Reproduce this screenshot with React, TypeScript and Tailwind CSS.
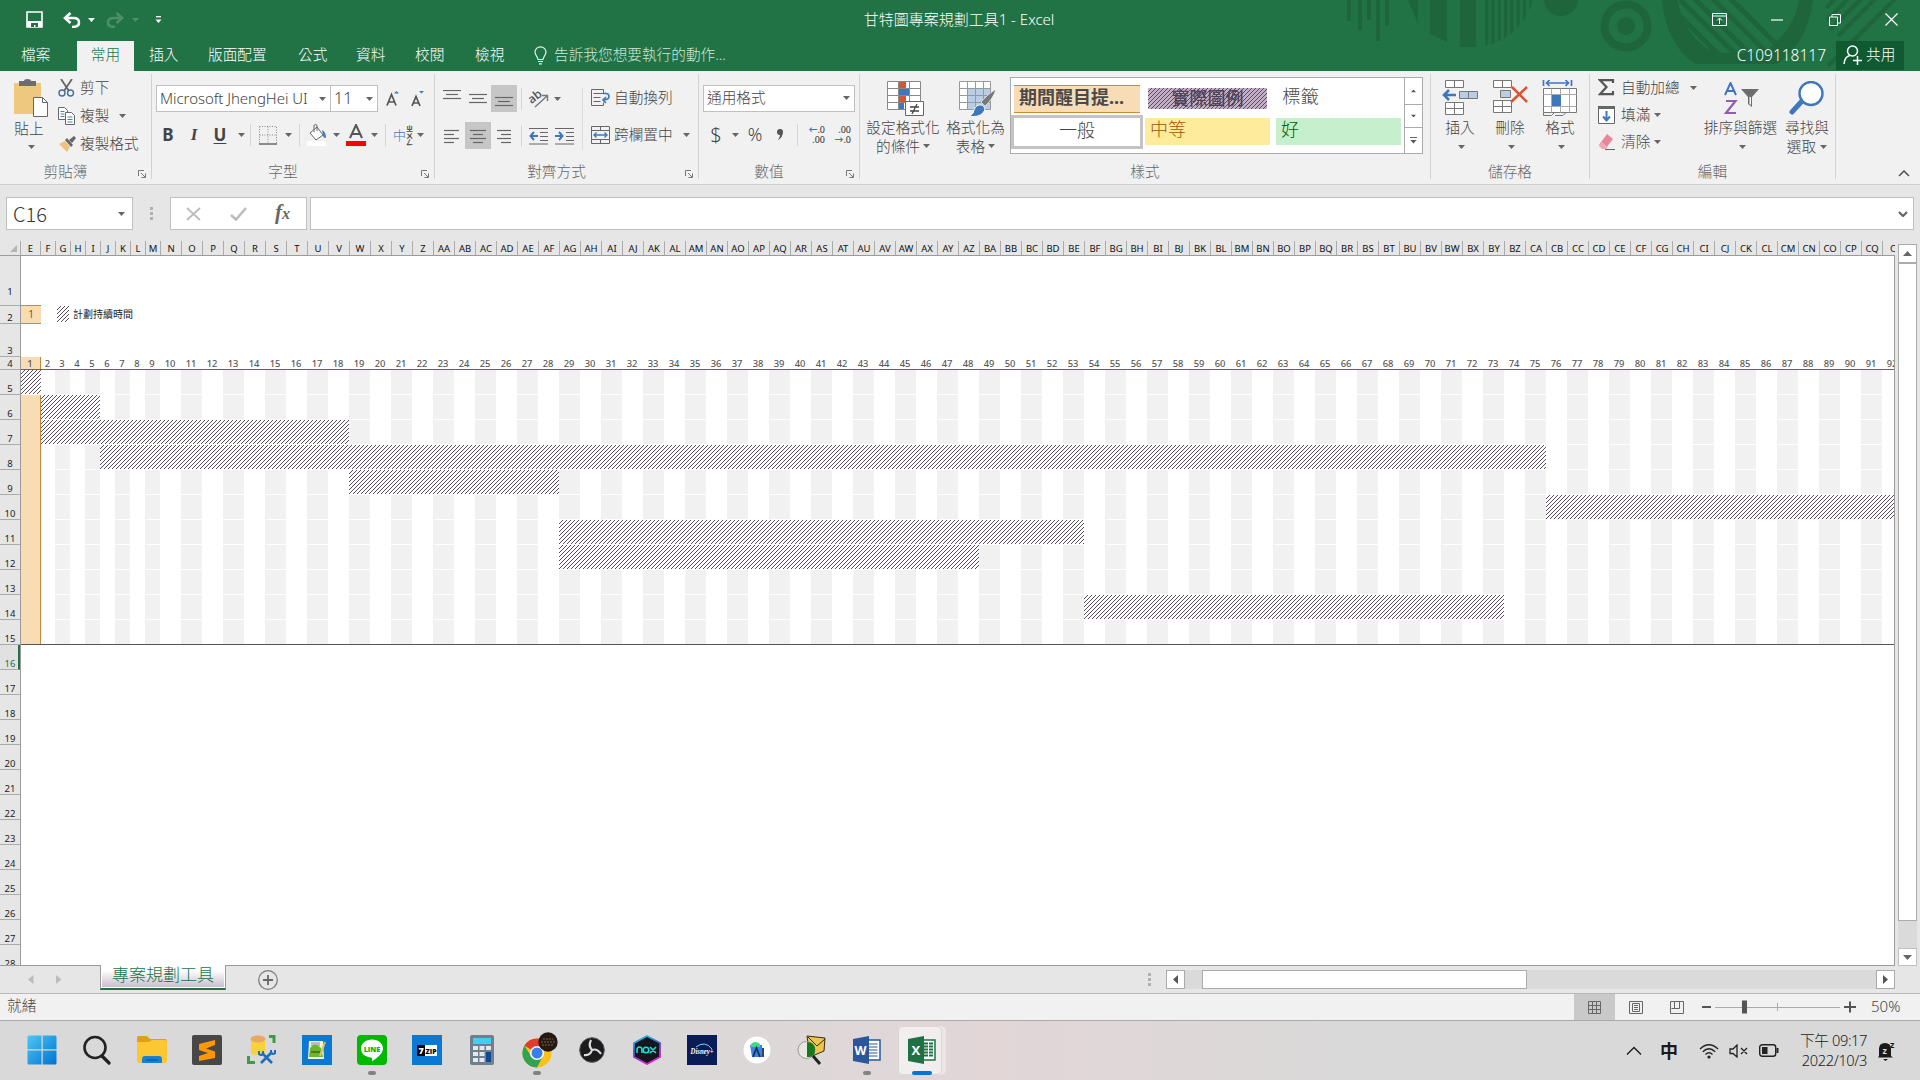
import React from "react";

type P = { children?: React.ReactNode; className?: string };

/* ---------- small drawing helpers ---------- */
const Svg = ({ w, h, children, className = "" }: P & { w: number; h: number }) => (
  <svg width={w} height={h} viewBox={`0 0 ${w} ${h}`} className={`block shrink-0 ${className}`} fill="none">
    {children}
  </svg>
);
const Caret = ({ className = "text-[#666]" }: P) => (
  <Svg w={7} h={4} className={className}>
    <path d="M0 0h7L3.5 4z" fill="currentColor" />
  </Svg>
);
const Slot = ({ children, className = "" }: P) => (
  <div className={`flex shrink-0 items-center justify-center ${className}`}>{children}</div>
);
const Launcher = () => (
  <Svg w={8} h={8}>
    <path d="M.5 6V.5H6M3 3l4 4M7.5 3.5v4h-4" stroke="#777" />
  </Svg>
);
const VSep = ({ className = "" }: P) => <div className={`h-[22px] w-px shrink-0 bg-[#d5d5d5] ${className}`} />;

const Group = ({ label, launcher, className = "", children }: P & { label: string; launcher?: boolean }) => (
  <section className={`flex h-[105px] shrink-0 flex-col border-r border-[#d2d2d2] ${className}`}>
    <div className="flex h-[88px] shrink-0">{children}</div>
    <div className="flex h-[19px] items-center">
      <div className="flex-1 text-center text-[#666]">{label}</div>
      {launcher && <div className="w-[20px] pl-[7px] pt-1"><Launcher /></div>}
    </div>
  </section>
);

const Lines = ({ w, rows }: { w: number; rows: [number, number, number][] }) => (
  <Svg w={w} h={18}>
    {rows.map(([x, y, l], i) => (
      <path key={i} d={`M${x} ${y + 0.5}h${l}`} stroke="#666" strokeWidth="1.2" />
    ))}
  </Svg>
);

/* ---------- title bar ---------- */
const Pattern = () => (
  <Svg w={580} h={71} className="absolute right-0 top-0">
    <defs>
      <clipPath id="ca"><circle cx="132" cy="-16" r="63" /></clipPath>
      <clipPath id="cb"><circle cx="397" cy="2" r="58" /></clipPath>
    </defs>
    <g fill="#1e653c">
      <path d="M7 0h4v21H7zM18 0h4v30h-4zM27 0h4v20h-4zM36 0h4v41h-4zM45 0h4v26h-4z" />
      <path d="M68 0h10v24zM90 0h17v42L90 34zM120 0h16v47h-16z" />
      <g clipPath="url(#ca)">
        {[0, 1, 2, 3, 4, 5, 6, 7].map((i) => (
          <rect key={i} x={145 + i * 6.3} y="0" width="3.4" height="60" />
        ))}
      </g>
      <circle cx="221" cy="-1" r="17" />
      <circle cx="286" cy="26" r="9" />
    </g>
    <circle cx="286" cy="26" r="21.5" stroke="#1e653c" strokeWidth="8" />
    <path d="M322 0h16c2 22 16 42 37 53h48c17-12 33-30 36-53h14c-3 28-17 52-36 64h-82C337 52 324 28 322 0z" fill="#1e653c" />
    <g clipPath="url(#cb)" stroke="#1e653c" strokeWidth="5">
      <path d="M330-10l82 80M342-14l90 90M356-18l90 90M372-20l80 80M322-2l70 70" />
    </g>
    <g stroke="#1e653c" strokeWidth="4">
      <path d="M486 8l10-10M487 20l22-22M490 30l34-34M498 36l42-42M488 66l70-70" />
    </g>
  </Svg>
);

const TitleBar = () => (
  <header className="relative h-[71px] shrink-0 overflow-hidden bg-[#217346] text-white">
    <Pattern />
    <div className="relative flex h-[39px] items-center">
      <div className="flex w-[640px] items-center">
        <Svg w={17} h={17} className="ml-[26px]">
          <path d="M1 1h15v15H1z" stroke="#fff" strokeWidth="1.6" />
          <path d="M1 10h15v6H1z" fill="#fff" />
          <path d="M5 12h7v4H9.500v-2H8v2H5z" fill="#217346" />
        </Svg>
        <Svg w={18} h={16} className="ml-[20px]">
          <path d="M2 6h8.500q5.500 0 5.500 4.500Q16 15 9 15" stroke="#fff" strokeWidth="2.500" />
          <path d="M7.500 1L2 6l5.500 5" stroke="#fff" strokeWidth="2.600" />
        </Svg>
        <Caret className="ml-[7px] text-white" />
        <Svg w={18} h={16} className="ml-[11px]">
          <path d="M16 6H7.500Q2 6 2 10.500 2 15 9 15" stroke="#4c9069" strokeWidth="2.500" />
          <path d="M10.500 1L16 6l-5.500 5" stroke="#4c9069" strokeWidth="2.600" />
        </Svg>
        <Caret className="ml-[8px] text-[#4c9069]" />
        <Svg w={7} h={7} className="ml-[16px]">
          <path d="M1 .7h5" stroke="#fff" strokeWidth="1.300" />
          <path d="M.5 3.500h6L3.500 7z" fill="#fff" />
        </Svg>
      </div>
      <div className="w-[640px] pr-[2px] text-center text-[15px]">甘特圖專案規劃工具1 - Excel</div>
      <div className="flex w-[640px] items-center justify-end">
        <Svg w={15} h={13}>
          <path d="M.5.5h14v12H.5zM.5 3h14M7.500 11V5.500M5 7.500l2.500-2.500L10 7.500" stroke="#fff" />
        </Svg>
        <Svg w={12} h={12} className="ml-[44px]"><path d="M0 6h12" stroke="#fff" strokeWidth="1.200" /></Svg>
        <Svg w={12} h={12} className="ml-[46px]">
          <path d="M.5 3h8v8.500h-8zM3 3V.5h8.500V9H8.500" stroke="#fff" />
        </Svg>
        <Svg w={13} h={13} className="ml-[44px] mr-[22px]"><path d="M.5.5l12 12M12.500.5l-12 12" stroke="#fff" strokeWidth="1.200" /></Svg>
      </div>
    </div>
    <nav className="relative flex h-[32px] items-center text-[14.67px] *:relative">
      <div className="w-[77px] pl-[21px]">檔案</div>
      <div className="flex h-[30px] w-[57px] items-center justify-center self-end bg-[#f1f1f1] pb-[2px] text-[#217346]">常用</div>
      <div className="w-[59px] pl-[15px]">插入</div>
      <div className="w-[90px] pl-[15px]">版面配置</div>
      <div className="w-[58px] pl-[15px]">公式</div>
      <div className="w-[59px] pl-[15px]">資料</div>
      <div className="w-[60px] pl-[15px]">校閱</div>
      <div className="w-[74px] pl-[15px]">檢視</div>
      <Svg w={13} h={19}>
        <path d="M4 13.500C4 11 1 9.500 1 6a5.500 5.200 0 0 1 11 0c0 3.500-3 5-3 7.500zM4 15.500h5M5 17.800h3" stroke="#e6f2ea" strokeWidth="1.200" />
      </Svg>
      <div className="ml-[7px] text-[#cfe6d8]">告訴我您想要執行的動作...</div>
      <div className="flex flex-1 items-center justify-end">
        <span className="mr-[10px] text-[15.500px]">C109118117</span>
        <div className="mr-4 flex h-[29px] w-[68px] items-center gap-[3px] bg-[#0f5a30] pl-[7px]">
          <Svg w={20} h={20}>
            <circle cx="9.500" cy="6" r="5" stroke="#fff" strokeWidth="1.500" />
            <path d="M1 19c.5-5 3-8 6-8.500M10 15.500h9M14.500 11v9" stroke="#fff" strokeWidth="1.500" />
          </Svg>
          <span>共用</span>
        </div>
      </div>
    </nav>
  </header>
);

/* ---------- ribbon ---------- */
const Clipboard = () => (
  <Group label="剪貼簿" launcher className="w-[152px]">
    <div className="flex w-[58px] flex-col items-center pt-[5px]">
      <Svg w={36} h={38} className="ml-[4px]">
        <path d="M1 4h27v31H1z" fill="#edc87e" />
        <path d="M6 2h5q0-2 3.500-2T18 2h5v5H6z" fill="#6d6d6d" />
        <path d="M20.500 18.500h9l5 5v14h-14z" fill="#fff" stroke="#666" />
        <path d="M29.500 18.500v5h5" stroke="#666" />
      </Svg>
      <div className="mt-px leading-[20px]">貼上</div>
      <Caret className="mt-[7px] ml-[4px] text-[#666]" />
    </div>
    <div className="flex flex-col">
      <div className="flex h-[28px] items-center">
        <Svg w={17} h={18}>
          <path d="M3 0l8 12M14 0L6 12" stroke="#666" strokeWidth="1.800" />
          <circle cx="4" cy="14" r="3" stroke="#41719c" strokeWidth="1.400" />
          <circle cx="12.500" cy="14" r="3" stroke="#41719c" strokeWidth="1.400" />
        </Svg>
        <span className="ml-[5px]">剪下</span>
      </div>
      <div className="flex h-[28px] items-center">
        <Svg w={18} h={18}>
          <path d="M.5.5h6l3 3v9h-9z" fill="#fff" stroke="#666" />
          <path d="M2.500 4.500h4M2.500 7h4M2.500 9.500h4" stroke="#4a7ebb" />
          <path d="M7.500 5.500h6l3 3v9h-9z" fill="#fff" stroke="#666" />
          <path d="M9.500 10h5M9.500 12.500h5M9.500 15h5" stroke="#4a7ebb" />
        </Svg>
        <span className="ml-[4px]">複製</span>
        <Caret className="ml-[10px] text-[#666]" />
      </div>
      <div className="flex h-[28px] items-center">
        <Svg w={18} h={16}>
          <path d="M1 8l6-3 5 6-3 5z" fill="#edc27e" />
          <path d="M7 4l2-2 6 7-2 2z" fill="#666" />
          <path d="M11 4l5-4 2 2-4 5z" fill="#666" />
        </Svg>
        <span className="ml-[4px]">複製格式</span>
      </div>
    </div>
  </Group>
);

const FontGroup = () => (
  <Group label="字型" launcher className="w-[283px]">
    <div className="flex flex-col pl-[4px]">
      <div className="mt-[11px] flex h-[27px] items-center">
        <div className="flex h-[27px] w-[175px] items-center border border-[#c0c0c0] bg-white pl-[3px] text-[15px] text-[#444]">
          <span className="w-[159px] whitespace-nowrap tracking-[-0.05px]">Microsoft JhengHei UI</span>
          <Caret />
        </div>
        <div className="-ml-px flex h-[27px] w-[48px] items-center border border-[#c0c0c0] bg-white pl-[3px] text-[16px] text-[#444]">
          <span className="w-[32px]">11</span>
          <Caret />
        </div>
        <Svg w={14} h={18} className="ml-[8px]">
          <path d="M1 15.500L5.500 4.500 10 15.500M2.500 12h6" stroke="#555" strokeWidth="1.700" />
          <path d="M8 3.500L10.500 1 13 3.500z" fill="#3f77bd" />
        </Svg>
        <Svg w={14} h={18} className="ml-[11px]">
          <path d="M1 16L5 6.500 9 16M2.500 13h5" stroke="#555" strokeWidth="1.700" />
          <path d="M8 1l2.500 2.500L13 1z" fill="#3f77bd" />
        </Svg>
      </div>
      <div className="mt-[10px] flex h-[26px] items-center text-[17px] text-[#444]">
        <Slot className="w-[24px] font-bold">B</Slot>
        <Slot className="w-[28px] font-bold italic font-[family-name:'Liberation_Serif']">I</Slot>
        <Slot className="w-[24px] font-bold underline underline-offset-2">U</Slot>
        <Slot className="w-[18px]"><Caret /></Slot>
        <VSep />
        <Svg w={18} h={19} className="ml-[8px]">
          <path d="M.5.5h17v17M.5.5v17M9 .5v17M.5 9h17" stroke="#888" strokeDasharray="1 1.500" />
          <path d="M0 18h18" stroke="#555" strokeWidth="1.300" />
        </Svg>
        <Caret className="ml-[8px] text-[#666]" />
        <VSep className="ml-[7px]" />
        <Svg w={20} h={22} className="ml-[7px]">
          <path d="M3 9l7-6 6 8-7 5z" fill="#fff" stroke="#666" />
          <path d="M7 8V2q0-1.500 1.500-1.500T10 2v5" stroke="#666" />
          <path d="M15 6q4 2 4 8-3 0-3-3z" fill="#3f77bd" />
          <path d="M0 17h19v5H0z" fill="#fff" />
        </Svg>
        <Caret className="ml-[6px] text-[#666]" />
        <Svg w={20} h={22} className="ml-[6px]">
          <path d="M4 14L10 1l6 13M6 10h8" stroke="#555" strokeWidth="2" />
          <path d="M0 17h20v5H0z" fill="#f00" />
        </Svg>
        <Caret className="ml-[5px] text-[#666]" />
        <VSep className="ml-[7px]" />
        <div className="ml-[7px] flex items-center">
          <span className="text-[13px] text-[#3f77bd]">中</span>
          <span className="flex flex-col text-[7px] font-bold leading-[7px] text-[#444]"><span>ㄓ</span><span>ㄨ</span><span>ㄥ</span></span>
        </div>
        <Caret className="ml-[4px] text-[#666]" />
      </div>
    </div>
  </Group>
);

const AlignGroup = () => (
  <Group label="對齊方式" launcher className="w-[264px]">
    <div className="flex w-[147px] flex-col pl-[4px]">
      <div className="mt-[11px] flex h-[27px] items-center">
        <Slot className="h-[27px] w-[26px]"><Lines w={18} rows={[[0, 0, 18], [3, 4, 12], [0, 8, 18]]} /></Slot>
        <Slot className="h-[27px] w-[26px]"><Lines w={18} rows={[[0, 4, 18], [3, 8, 12], [0, 12, 18]]} /></Slot>
        <Slot className="h-[27px] w-[26px] bg-[#c6c6c6]"><Lines w={18} rows={[[0, 7, 18], [3, 11, 12], [0, 15, 18]]} /></Slot>
        <VSep className="ml-[4px]" />
        <Svg w={21} h={18} className="ml-[7px]">
          <text x="0" y="11" transform="rotate(-38 6 9)" fontSize="12" fontWeight="600" fill="#555" fontFamily="Open Sans">ab</text>
          <path d="M6 17L18 6M13 5.500h5.500V11" stroke="#777" strokeWidth="1.400" />
        </Svg>
        <Caret className="ml-[4px] text-[#666]" />
      </div>
      <div className="mt-[10px] flex h-[27px] items-center">
        <Slot className="h-[27px] w-[26px]"><Lines w={16} rows={[[0, 3, 15], [0, 7, 10], [0, 11, 15], [0, 15, 10]]} /></Slot>
        <Slot className="h-[27px] w-[26px] bg-[#c6c6c6]"><Lines w={16} rows={[[0, 3, 16], [3, 7, 10], [0, 11, 16], [3, 15, 10]]} /></Slot>
        <Slot className="h-[27px] w-[26px]"><Lines w={16} rows={[[1, 3, 14], [5, 7, 10], [1, 11, 14], [5, 15, 10]]} /></Slot>
        <VSep className="ml-[4px]" />
        <Svg w={19} h={18} className="ml-[7px]">
          <path d="M0 1.500h19M11 5.500h8M11 9.500h8M11 13.500h8M0 17h19" stroke="#666" />
          <path d="M9 9H2M5 5L1.500 9 5 13" stroke="#3f77bd" strokeWidth="2" />
        </Svg>
        <Svg w={19} h={18} className="ml-[7px]">
          <path d="M0 1.500h19M11 5.500h8M11 9.500h8M11 13.500h8M0 17h19" stroke="#666" />
          <path d="M0 9h7M4 5l3.500 4L4 13" stroke="#3f77bd" strokeWidth="2" />
        </Svg>
      </div>
    </div>
    <div className="mt-[14px] h-[62px] w-px bg-[#dcdcdc]" />
    <div className="flex flex-col pl-[8px]">
      <div className="mt-[10px] flex h-[27px] items-center">
        <Svg w={19} h={18}>
          <path d="M.5.500h12v4M.5.500v16h12v-3M2.500 4.500h12M2.500 8.500h7M2.500 12.500h7" stroke="#666" />
          <path d="M13 4.500h2q3 0 3 3t-5 3.500M15 8l-3 3 3 3" stroke="#3f77bd" strokeWidth="1.600" />
        </Svg>
        <span className="ml-[4px]">自動換列</span>
      </div>
      <div className="mt-[10px] flex h-[27px] items-center">
        <Svg w={19} h={18}>
          <path d="M.5.500h18v17H.5zM.5 4.500h18M.5 13.500h18M9.500.500v4M9.500 13.500v4" stroke="#666" />
          <path d="M3 9h13M5.500 6.500L3 9l2.500 2.500M13.500 6.500L16 9l-2.500 2.500" stroke="#3f77bd" strokeWidth="1.400" />
        </Svg>
        <span className="ml-[4px]">跨欄置中</span>
        <Caret className="ml-[10px] text-[#666]" />
      </div>
    </div>
  </Group>
);

const NumberGroup = () => (
  <Group label="數值" launcher className="w-[161px]">
    <div className="flex flex-col pl-[4px]">
      <div className="mt-[11px] flex h-[27px] w-[152px] items-center justify-between border border-[#c0c0c0] bg-white pb-px pl-[3px] pr-[4px] text-[#444]">
        通用格式 <Caret />
      </div>
      <div className="mt-[10px] flex h-[26px] items-center text-[#444]">
        <Slot className="w-[26px] text-[20px]">$</Slot>
        <Slot className="w-[12px]"><Caret /></Slot>
        <Slot className="w-[28px] text-[18px]">%</Slot>
        <Svg w={6} h={12} className="ml-[8px]"><path d="M3 0a2.700 2.700 0 0 1 3 3q0 5-5 8 2-3 2-5A3 3 0 0 1 3 0z" fill="#555" /></Svg>
        <VSep className="ml-[14px]" />
        <div className="ml-[9px] flex w-[18px] flex-col text-right text-[9px] font-medium leading-[10px]">
          <span className="whitespace-nowrap"><span className="font-bold text-[#3f77bd]">←</span>.0</span><span>.00</span>
        </div>
        <div className="ml-[8px] flex w-[18px] flex-col text-right text-[9px] font-medium leading-[10px]">
          <span>.00</span><span className="whitespace-nowrap"><span className="font-bold text-[#3f77bd]">→</span>.0</span>
        </div>
      </div>
    </div>
  </Group>
);

const StylesGroup = () => (
  <Group label="樣式" className="w-[571px]">
    <div className="flex w-[80px] flex-col items-center pl-[6px] pt-[7px]">
      <Svg w={38} h={36} className="ml-[6px]">
        <path d="M.5.500h33v28H.5z" fill="#fff" />
        <path d="M11 0h8v7h-8zM11 14h8v7h-8z" fill="#d65532" />
        <path d="M11 7h11v7H11zM11 21h6v7h-6z" fill="#3f77bd" />
        <path d="M.5.500h33v28H.5zM.5 7.500h33M.5 14.500h33M.5 21.500h33M11.500.500v28M22.500.500v28" stroke="#888" />
        <path d="M18.500 20.500h18v14h-18z" fill="#fff" stroke="#666" />
        <path d="M23 26h9M23 30h9M30 23l-5 10" stroke="#444" strokeWidth="1.300" />
      </Svg>
      <div className="whitespace-nowrap leading-[20px]">設定格式化</div>
      <div className="flex items-center gap-[3px] whitespace-nowrap leading-[18px]">的條件 <Caret /></div>
    </div>
    <div className="flex w-[67px] flex-col items-center pl-[4px] pt-[7px]">
      <Svg w={38} h={36} className="ml-[4px]">
        <path d="M.5.500h31v28H.5z" fill="#fff" />
        <path d="M8 7h24v21H8z" fill="#b9cde5" />
        <path d="M.5.500h31v28H.5zM.5 7.500h31M.5 14.500h31M.5 21.500h31M8.500.500v28M16.500.500v28M24.500.500v28" stroke="#999" />
        <path d="M37 8q-3 10-11 17l-4-4Q29 13 37 8z" fill="#777" stroke="#fff" strokeWidth=".6" />
        <path d="M23 24q5 3 1 8-5 5-14 3 5-2 5-6 2-6 8-5z" fill="#3f77bd" stroke="#fff" />
      </Svg>
      <div className="whitespace-nowrap leading-[20px]">格式化為</div>
      <div className="flex items-center gap-[3px] whitespace-nowrap leading-[18px]">表格 <Caret /></div>
    </div>
    <div className="ml-[3px] mt-[3px] flex h-[77px] w-[413px] border border-[#ababab] bg-white text-[18px]">
      <div className="grid flex-1 grid-cols-[130px_131px_131px] grid-rows-[37px_38px]">
        <div className="ml-[3px] mt-[7px] mr-[1px] flex h-[28px] items-center border-y border-[#d28a2e] bg-[#f7dcb5] pb-[2px] pl-[5px] font-bold text-[#4a4a4a]">期間醒目提...</div>
        <div className="ml-[7px] mt-[10px] h-[21px] w-[119px] overflow-hidden bg-[#c5afc8]">
          <Hatch id="legend" />
          <div className="relative -mt-[21px] flex h-[21px] items-center justify-center font-medium leading-[21px] text-[#4d4458]">實際圖例</div>
        </div>
        <div className="flex h-[37px] items-center pl-[10px]">
          <span className="text-[18.500px] text-[#4a4a4a]">標籤</span>
        </div>
        <div className="mr-[-2px] flex h-[34px] items-center justify-center border-3 border-[#c3c3c3] pb-[3px] text-[#444]">一般</div>
        <div className="ml-[4px] mt-[3px] mr-[2px] flex h-[27px] items-center bg-[#ffeb9c] pb-[3px] pl-[5px] text-[#9c5700]">中等</div>
        <div className="ml-[4px] mt-[3px] mr-[2px] flex h-[27px] items-center bg-[#c6efce] pb-[3px] pl-[5px] text-[#006100]">好</div>
      </div>
      <div className="flex w-[18px] flex-col border-l border-[#ababab]">
        <Slot className="h-[26px]"><Caret className="rotate-180 scale-75 text-[#555]" /></Slot>
        <Slot className="h-[24px] border-y border-[#ababab]"><Caret className="scale-75 text-[#555]" /></Slot>
        <Slot className="flex-1"><Svg w={7} h={8}><path d="M0 .5h7" stroke="#666" /><path d="M.5 3h6L3.500 6.500z" fill="#555" /></Svg></Slot>
      </div>
    </div>
  </Group>
);

const CellsGroup = () => (
  <Group label="儲存格" className="w-[159px]">
    <div className="flex pl-[4px] pt-[6px]">
      <div className="flex w-[50px] flex-col items-center">
        <Svg w={37} h={38}>
          <path d="M3.500.500h18v7h-18zM12.500.500v7M3.500 22.500h18v12h-18zM12.500 22.500v12M3.500 28.500h18" fill="#fff" stroke="#777" />
          <path d="M17.500 11.500h18v7h-18zM26.500 11.500v7" fill="#b9cde5" stroke="#777" />
          <path d="M14 15H2M7 10l-5 5 5 5" stroke="#3f77bd" strokeWidth="2.600" />
        </Svg>
        <div className="leading-[19px]">插入</div><Caret className="mt-[8px] ml-[3px] text-[#666]" />
      </div>
      <div className="flex w-[50px] flex-col items-center">
        <Svg w={37} h={38}>
          <path d="M1.500.500h18v7h-18zM10.500.500v7M1.500 20.500h18v12h-18zM10.500 20.500v12M1.500 26.500h18" fill="#fff" stroke="#777" />
          <path d="M8.500 10.500h10v7h-10z" fill="#b9cde5" stroke="#777" />
          <path d="M20 7l15 15M35 7L19 22" stroke="#d65532" strokeWidth="2.600" />
        </Svg>
        <div className="leading-[19px]">刪除</div><Caret className="mt-[8px] ml-[3px] text-[#666]" />
      </div>
      <div className="flex w-[50px] flex-col items-center">
        <Svg w={36} h={38}>
          <path d="M1.500 0v6M29.500 0v6M4 3h23M7.500 0L4.500 3 7.500 6M23.500 0l3 3-3 3" stroke="#3f77bd" strokeWidth="1.700" />
          <path d="M1.500 8.500h33v24h-33z" fill="#fff" stroke="#777" />
          <path d="M1.500 14.500h33M1.500 26.500h33M9.500 8.500v24M18.500 8.500v24M27.500 8.500v24" stroke="#aaa" />
          <path d="M10 15h9v11h-9z" fill="#3f77bd" />
          <path d="M1.500 32.500v3h8l3-3M13 35.500h8l3-3" stroke="#777" />
        </Svg>
        <div className="leading-[19px]">格式</div><Caret className="mt-[8px] ml-[3px] text-[#666]" />
      </div>
    </div>
  </Group>
);

const EditGroup = () => (
  <Group label="編輯" className="w-[246px]">
    <div className="flex w-[112px] flex-col pl-[8px]">
      <div className="flex h-[27px] items-center">
        <Svg w={17} h={17}><path d="M15 4V1.200H2L8.500 8 2 15.200h13V12" stroke="#555" strokeWidth="2.200" /></Svg>
        <span className="ml-[6px] whitespace-nowrap">自動加總</span><Caret className="ml-[10px] text-[#666]" />
      </div>
      <div className="flex h-[27px] items-center">
        <Svg w={17} h={18}>
          <path d="M.5.500h16v17H.5z" fill="#fff" stroke="#666" /><path d="M0 0h17v3H0z" fill="#666" />
          <path d="M8.500 5v9M5 10.500l3.500 4 3.500-4" stroke="#3f77bd" strokeWidth="2" />
        </Svg>
        <span className="ml-[6px]">填滿</span><Caret className="ml-[4px] text-[#666]" />
      </div>
      <div className="flex h-[27px] items-center">
        <Svg w={17} h={16}>
          <path d="M9 0l6 5-7 9H4L1 11z" fill="#e8879a" /><path d="M4 8l6 5-2 2H4l-3-3z" fill="#f2a9b6" /><path d="M7 15.500h10" stroke="#666" />
        </Svg>
        <span className="ml-[6px]">清除</span><Caret className="ml-[4px] text-[#666]" />
      </div>
    </div>
    <div className="flex w-[77px] flex-col items-center pt-[8px]">
      <Svg w={36} h={36}>
        <path d="M2 13L7.500 1 13 13M4 9h7" stroke="#3f77bd" strokeWidth="2" />
        <path d="M3 19h9.500L3 31h10" stroke="#8c5fb0" strokeWidth="2.200" />
        <path d="M18 7h18l-7 8v10l-4-3v-7z" fill="#6d6d6d" />
        <path d="M26.500 15v7l1.500 1v-8z" fill="#fff" />
      </Svg>
      <div className="whitespace-nowrap leading-[19px]">排序與篩選</div><Caret className="mt-[8px] ml-[3px] text-[#666]" />
    </div>
    <div className="flex w-[56px] flex-col items-center pt-[7px]">
      <Svg w={36} h={36}>
        <path d="M13 20L3 31" stroke="#3f77bd" strokeWidth="5" strokeLinecap="round" />
        <circle cx="22" cy="12.500" r="11.500" fill="#fff" stroke="#3f77bd" strokeWidth="2.400" />
      </Svg>
      <div className="whitespace-nowrap leading-[20px]">尋找與</div>
      <div className="flex items-center gap-[4px] whitespace-nowrap leading-[19px]">選取 <Caret /></div>
    </div>
  </Group>
);

const Ribbon = () => (
  <div className="flex h-[114px] shrink-0 border-b border-[#cfcfcf] bg-[#f1f1f1] pt-[3px] text-[14.67px] text-[#444]">
    <Clipboard />
    <FontGroup />
    <AlignGroup />
    <NumberGroup />
    <StylesGroup />
    <CellsGroup />
    <EditGroup />
    <div className="flex flex-1 items-end justify-end pb-[7px] pr-[10px]">
      <Svg w={12} h={7}><path d="M1 6l5-5 5 5" stroke="#555" strokeWidth="1.600" /></Svg>
    </div>
  </div>
);

/* ---------- formula bar ---------- */
const Dots = () => (
  <div className="flex flex-col gap-[2px]">
    <div className="size-[3px] bg-[#b0b0b0]" /><div className="size-[3px] bg-[#b0b0b0]" /><div className="size-[3px] bg-[#b0b0b0]" />
  </div>
);
const FormulaBar = () => (
  <div className="flex h-[56px] shrink-0 items-start bg-[#e6e6e6] pt-[12px]">
    <div className="ml-[6px] flex h-[33px] w-[127px] items-center justify-between border border-[#c0c0c0] bg-white pl-[6px] pr-[7px] text-[20px] font-light text-[#333]">
      <span className="font-[family-name:'Noto_Sans_CJK_TC']">C16</span><Caret />
    </div>
    <Slot className="h-[33px] w-[37px]"><Dots /></Slot>
    <div className="flex h-[33px] w-[137px] items-center border border-[#c0c0c0] bg-white">
      <Slot className="w-[45px] pr-px"><Svg w={15} h={14}><path d="M1 1l13 12M14 1L1 13" stroke="#bcbcbc" strokeWidth="1.800" /></Svg></Slot>
      <Slot className="w-[45px]"><Svg w={17} h={14}><path d="M1 8l5 4.500L16 1" stroke="#bcbcbc" strokeWidth="2.600" /></Svg></Slot>
      <Slot className="w-[43px] pb-[3px] text-[21px] font-bold italic text-[#666] font-[family-name:'Liberation_Serif']"><span className="leading-none">f<span className="text-[16px]">x</span></span></Slot>
    </div>
    <div className="ml-[3px] flex h-[33px] w-[1604px] items-center justify-end border border-[#c0c0c0] bg-white pr-[5px]">
      <Svg w={10} h={6}><path d="M1 1l4 4 4-4" stroke="#666" strokeWidth="2.200" /></Svg>
    </div>
  </div>
);

/* ---------- sheet ---------- */
const colName = (n: number): string => (n <= 26 ? String.fromCharCode(64 + n) : colName(Math.floor((n - 1) / 26)) + String.fromCharCode(65 + ((n - 1) % 26)));
const headWidth = (period: number) => (period === 1 ? 20 : period <= 9 ? 15 : 21);
/* body cells start one pixel after the row-header border, which period 2 absorbs */
const cellWidth = (period: number) => (period === 2 ? 14 : headWidth(period));
const cellLeft = (period: number) => {
  let x = 0;
  for (let i = 1; i < period; i++) x += cellWidth(i);
  return x;
};
const PERIODS = Array.from({ length: 92 }, (_, i) => i + 1);

const Hatch = ({ id }: { id: string }) => (
  <svg width="100%" height="100%" className="block">
    <defs>
      <pattern id={`h-${id}`} width="4" height="4" patternUnits="userSpaceOnUse">
        <path d="M3 0h1v1H3zM2 1h1v1H2zM1 2h1v1H1zM0 3h1v1H0z" fill="#5a4a5d" shapeRendering="crispEdges" />
      </pattern>
    </defs>
    <rect width="100%" height="100%" fill={`url(#h-${id})`} />
  </svg>
);

const TASKS: { row: number; from?: number; to?: number }[] = [
  { row: 5, from: 1, to: 1 },
  { row: 6, from: 2, to: 5 },
  { row: 7, from: 2, to: 18 },
  { row: 8, from: 6, to: 75 },
  { row: 9, from: 19, to: 28 },
  { row: 10, from: 76, to: 92 },
  { row: 11, from: 29, to: 53 },
  { row: 12, from: 29, to: 48 },
  { row: 13 },
  { row: 14, from: 54, to: 73 },
  { row: 15 },
];

const ROWS = [50, 18, 33, 13, ...Array.from({ length: 24 }, () => 25)];

const TaskRow = ({ row, from, to }: { row: number; from?: number; to?: number }) => (
  <div className="flex h-[25px] w-[1874px] overflow-hidden">
    {PERIODS.filter((p) => !(from && to && p > from && p <= to)).map((p) => {
      if (from && to && p === from)
        return (
          <div key={p} className="h-[24px] shrink-0 bg-white" style={{ width: cellLeft(to + 1) - cellLeft(from) }}>
            <Hatch id={`r${row}`} />
          </div>
        );
      const bg = p === 1 ? "h-[25px] border-r border-[#c8863a] bg-[#f8dcb4]" : p % 2 ? "h-[24px] bg-[#f1f1f1]" : "h-[24px] bg-white";
      return <div key={p} className={`shrink-0 ${bg}`} style={{ width: cellWidth(p) }} />;
    })}
  </div>
);

const Sheet = () => (
  <div className="flex h-[725px] shrink-0 bg-[#e6e6e6]">
    <div className="flex w-[1895px] flex-col">
      <div className="flex h-[15px] shrink-0 overflow-hidden border-b border-[#9b9b9b] text-[9.5px] font-normal text-[#111]">
        <div className="flex w-[20px] shrink-0 items-center justify-end pr-[3px]">
          <Svg w={7} h={7}><path d="M7 0v7H0z" fill="#b4b4b4" /></Svg>
        </div>
        {PERIODS.map((p) => (
          <div key={p} className="flex h-[14px] shrink-0 items-center justify-center border-l border-[#ababab] pt-[2px] leading-none" style={{ width: headWidth(p) }}>
            {p === 92 ? "C" : colName(p + 4)}
          </div>
        ))}
      </div>
      <div className="flex h-[710px] overflow-hidden border-b border-[#9b9b9b]">
        <div className="flex w-[21px] shrink-0 flex-col border-r border-[#9b9b9b] text-[9.5px] font-normal text-[#222]">
          {ROWS.map((h, i) => (
            <div
              key={i}
              className={`flex shrink-0 items-end justify-center border-b border-[#ababab] leading-[11px] ${i === 0 ? "pb-[8px]" : ""} ${i === 15 ? "border-r-2 border-r-[#217346] bg-[#e1e1e1] pl-[2px] text-[#217346]" : ""}`}
              style={{ height: h }}
            >
              {i + 1}
            </div>
          ))}
        </div>
        <div className="flex w-[1874px] flex-col overflow-hidden border-r border-[#9b9b9b] bg-white">
          <div className="h-[49px] shrink-0" />
          <div className="flex h-[19px] shrink-0">
            <div className="flex h-[19px] w-[20px] items-center justify-center border-y border-[#d28a2e] bg-[#f8dcb4] text-[10px] font-normal text-[#6b5a48]">1</div>
            <div className="ml-[16px] mt-px h-[16px] w-[12px]"><Hatch id="key" /></div>
            <div className="ml-[4px] text-[10px] font-normal leading-[19px] text-[#222]">計劃持續時間</div>
          </div>
          <div className="h-[33px] shrink-0" />
          <div className="flex h-[13px] w-[1900px] shrink-0 border-b border-[#6b5a73] text-[9.4px] font-medium leading-[14px] text-[#595959]">
            {PERIODS.map((p) => (
              <div
                key={p}
                className={`shrink-0 pr-[1px] text-center ${p === 1 ? "border-r border-[#c8863a] bg-[#f8dcb4]" : ""}`}
                style={{ width: cellWidth(p) }}
              >
                {p}
              </div>
            ))}
          </div>
          <div className="h-[275px] w-full shrink-0 overflow-hidden border-b border-[#555]">
            {TASKS.map((t) => <TaskRow key={t.row} {...t} />)}
          </div>
        </div>
      </div>
    </div>
    <div className="flex flex-1 flex-col items-start pl-[3px] pt-[3px]">
      <Slot className="h-[19px] w-[19px] border border-[#ababab] bg-white"><Svg w={9} h={5}><path d="M0 5h9L4.500 0z" fill="#666" /></Svg></Slot>
      <div className="h-[658px] w-[19px] border border-[#ababab] bg-white" />
      <div className="w-[19px] flex-1 bg-[#dadada]" />
      <Slot className="h-[18px] w-[19px] border border-[#c0c0c0] bg-white"><Svg w={9} h={5}><path d="M0 0h9L4.500 5z" fill="#666" /></Svg></Slot>
    </div>
  </div>
);

const SheetTabs = () => (
  <div className="flex h-[28px] shrink-0 border-b border-[#b8b8b8] bg-[#e6e6e6]">
    <div className="flex w-[100px] items-center pl-[28px]">
      <Svg w={6} h={9}><path d="M5.500 0v9L0 4.500z" fill="#bbb" /></Svg>
      <Svg w={6} h={9} className="ml-[22px]"><path d="M0 0v9l5.500-4.500z" fill="#bbb" /></Svg>
    </div>
    <div className="-mt-px flex h-[25px] w-[126px] border-x border-b-2 border-x-[#9b9b9b] border-b-[#217346] bg-white px-[1px] pb-[1px]">
      <div className="flex flex-1 items-center justify-center bg-linear-to-b from-white from-25% to-[#cbbdce] pb-[3px] text-[17px] leading-none text-[#217346]">專案規劃工具</div>
    </div>
    <Svg w={20} h={20} className="ml-[32px] mt-[4px]">
      <circle cx="10" cy="10" r="9.300" stroke="#777" strokeWidth="1.200" />
      <path d="M10 5v10M5 10h10" stroke="#666" strokeWidth="1.800" />
    </Svg>
    <div className="flex-1" />
    <Slot className="mr-[15px]"><Dots /></Slot>
    <div className="mr-[25px] mt-[4px] flex h-[19px] w-[729px] bg-[#dadada]">
      <Slot className="w-[19px] border border-[#ababab] bg-white"><Svg w={5} h={9}><path d="M5 0v9L0 4.500z" fill="#555" /></Svg></Slot>
      <div className="ml-[17px] w-[325px] border border-[#ababab] bg-white" />
      <div className="flex-1" />
      <Slot className="w-[19px] border border-[#ababab] bg-white"><Svg w={5} h={9}><path d="M0 0v9l5-4.500z" fill="#555" /></Svg></Slot>
    </div>
  </div>
);

const StatusBar = () => (
  <div className="flex h-[27px] shrink-0 items-center border-b border-[#a9a9a9] bg-[#f1f1f1] text-[14.67px] text-[#444]">
    <div className="flex-1 pb-[2px] pl-[7px]">就緒</div>
    <Slot className="h-[26px] w-[41px] bg-[#c9c9c9]"><Svg w={13} h={13}><path d="M.5.500h12v12H.5zM.5 4.500h12M.5 8.500h12M4.500.500v12M8.500.500v12" stroke="#666" /></Svg></Slot>
    <Slot className="w-[41px]"><Svg w={14} h={13}><path d="M.5.500h13v12H.5zM3.500 2.500h7v8h-7zM5 4.500h4M5 6.500h4M5 8.500h4" stroke="#666" /></Svg></Slot>
    <Slot className="w-[41px]"><Svg w={14} h={13}><path d="M.5.500h13v12H.5zM4.500.500v7M9.500.500v7h-8" stroke="#666" /></Svg></Slot>
    <Svg w={154} h={16} className="ml-[5px]">
      <path d="M0 8h9" stroke="#555" strokeWidth="2" />
      <path d="M13 8.500h125M75.500 4v8" stroke="#aaa" />
      <path d="M40 1.500h5v13h-5z" fill="#555" />
      <path d="M142 8h12M148 2.500v11" stroke="#555" strokeWidth="2" />
    </Svg>
    <div className="w-[64px] pb-px pl-[15px] text-[15px]">50%</div>
  </div>
);

/* ---------- taskbar ---------- */
const TaskIcon = ({ children, dot }: P & { dot?: boolean }) => (
  <div className="flex h-[59px] w-[55px] shrink-0 flex-col items-center">
    <div className="mt-[11px] flex h-[36px] items-center justify-center">{children}</div>
    {dot && <div className="mt-[3px] h-[4px] w-[8px] rounded-full bg-[#828282]" />}
  </div>
);

const Taskbar = () => (
  <footer className="flex h-[59px] shrink-0 bg-linear-to-r from-[#d9d9d9] from-30% via-[#e2d6d7] via-52% to-[#d9d9d9] to-72% pl-[14px]">
    <TaskIcon><Svg w={30} h={30}>
      <defs><linearGradient id="win" x1="0" y1="0" x2="1" y2="1"><stop stopColor="#4cc8f5" /><stop offset="1" stopColor="#0072d0" /></linearGradient></defs>
      <path d="M2 .5h12.500v13.700H.5V2A1.500 1.500 0 0 1 2 .5zM15.700.5H28A1.500 1.500 0 0 1 29.500 2v12.200H15.700zM.5 15.500h14v14H2A1.500 1.500 0 0 1 .5 28zM15.700 15.500h13.800V28a1.500 1.500 0 0 1-1.500 1.500H15.700z" fill="url(#win)" />
    </Svg></TaskIcon>
    <TaskIcon><Svg w={28} h={30}><circle cx="12" cy="12.500" r="10.500" stroke="#222" strokeWidth="2.600" /><path d="M19 21l7 7" stroke="#222" strokeWidth="3.200" strokeLinecap="round" /></Svg></TaskIcon>
    <TaskIcon><Svg w={30} h={28}>
      <path d="M0 2q0-2 2-2h8l3 3h15q2 0 2 2v6H0z" fill="#e0a012" /><path d="M0 6h12l3-2h13q2 0 2 2v19q0 2-2 2H2q-2 0-2-2z" fill="#fbc834" />
      <path d="M5 27v-4q0-3 3-3h14q3 0 3 3v4z" fill="#1582d8" /><path d="M9 24h12" stroke="#0b5ea8" strokeWidth="1.500" />
    </Svg></TaskIcon>
    <TaskIcon><Svg w={30} h={30}><rect width="30" height="30" rx="2" fill="#474747" /><path d="M23 5v5l-9 3.500 9 3v6.500L7 26v-5l9-3-9-3V9z" fill="#ff9800" /></Svg></TaskIcon>
    <TaskIcon><Svg w={29} h={30}>
      <path d="M4 4v14q0 2 8 2t6-2V4z" fill="#f9d335" /><ellipse cx="11" cy="4" rx="7.500" ry="3.500" fill="#e8a860" />
      <path d="M22 1.500h5V8M1.500 21v6.500H8" stroke="#3f9b4a" strokeWidth="3" />
      <path d="M15 18l10 10M25 17L14 28" stroke="#1b6fbf" strokeWidth="2.600" /><path d="M12 16v3q2 2 4 0v-3M28 15v3q-2 2-4 0v-3" stroke="#1b6fbf" strokeWidth="2" />
    </Svg></TaskIcon>
    <TaskIcon><Svg w={30} h={30}><path d="M0 0h30v30H0z" fill="#0b78d4" /><path d="M7 6h14l1 18H6z" fill="#eef6e0" /><path d="M8 13q5-7 11 0l2 9H7z" fill="#6fb52c" /><path d="M9 8h9M9 10h9" stroke="#88a" /><path d="M23 7l-5 14" stroke="#e0c060" strokeWidth="2" /><path d="M9 17h9" stroke="#3a6a18" strokeWidth="1.500" /></Svg></TaskIcon>
    <TaskIcon dot><Svg w={30} h={30}><rect width="30" height="30" rx="4" fill="#00b900" /><path d="M15 4.500c6.500 0 11 4 11 9 0 5.500-7 10-11 13 .5-3 0-4-1-4C8 22 4 18.500 4 13.500c0-5 4.500-9 11-9z" fill="#fff" /><text x="15" y="16.500" textAnchor="middle" fontSize="7.200" fontWeight="800" fill="#00b900" fontFamily="Open Sans">LINE</text></Svg></TaskIcon>
    <TaskIcon><Svg w={30} h={30}><path d="M0 0h30v30H0z" fill="#0b78d4" /><path d="M5 10h9v11H5z" fill="#000" /><path d="M13 10h12v11H13z" fill="#fff" /><text x="6.500" y="18.500" fontSize="9" fontWeight="800" fill="#fff" fontFamily="Open Sans">7</text><text x="13.500" y="19" fontSize="7" fontWeight="800" fill="#000" fontFamily="Open Sans" textLength="11" lengthAdjust="spacingAndGlyphs">ZIP</text></Svg></TaskIcon>
    <TaskIcon><Svg w={24} h={30}>
      <rect width="24" height="30" rx="2" fill="#6f7f8c" /><path d="M3 3h18v6H3z" fill="#3fd0f5" />
      <path d="M3 11h5v4H3zM9.500 11h5v4h-5zM16 11h5v4h-5zM3 17h5v4H3zM9.500 17h5v4h-5zM3 23h5v4H3zM9.500 23h5v4h-5z" fill="#e4e8ec" /><path d="M16 17h5v10h-5z" fill="#0e4a94" />
    </Svg></TaskIcon>
    <TaskIcon dot><Svg w={36} h={36} className="ml-[6px]">
      <circle cx="15" cy="21" r="14.500" fill="#fbc116" /><path d="M15 21L2.400 13.700A14.500 14.500 0 0 1 27.600 13.700z" fill="#e33b2e" /><path d="M2.400 13.700A14.500 14.500 0 0 0 15 35.500L21 24H9z" fill="#31a350" />
      <circle cx="15" cy="21" r="7" fill="#fff" /><circle cx="15" cy="21" r="5.500" fill="#3b7ded" /><circle cx="26" cy="10" r="9.700" fill="#231a17" /><path d="M19 10h14M21 7h10M20 13h12" stroke="#6a4a28" strokeWidth="1.500" strokeDasharray="2 1" />
    </Svg></TaskIcon>
    <TaskIcon><Svg w={26} h={26}><circle cx="13" cy="13" r="12.300" fill="#1c1b1e" stroke="#555" /><path d="M13 13Q9 9 12 3M13 13q5-2 9 4M13 13q-2 6-8 5" stroke="#ddd" strokeWidth="2.200" /></Svg></TaskIcon>
    <TaskIcon><Svg w={30} h={30}>
      <defs><linearGradient id="nox" x1="0" y1="0" x2=".3" y2="1"><stop stopColor="#19d8e8" /><stop offset=".5" stopColor="#4a52c8" /><stop offset="1" stopColor="#e020d0" /></linearGradient></defs>
      <path d="M15 1l13 7v14l-13 7-13-7V8z" fill="#15171f" stroke="url(#nox)" strokeWidth="1.800" />
      <path d="M5 18v-3q0-3 2.500-3T10 15v3M18 12l6 6M24 12l-6 6" stroke="#19e0d0" strokeWidth="1.600" /><circle cx="14" cy="15" r="2.800" stroke="#19e0d0" strokeWidth="1.600" />
    </Svg></TaskIcon>
    <TaskIcon><Svg w={30} h={30}><path d="M0 0h30v30H0z" fill="#0a1c56" /><path d="M9 12q9-7 16 2" stroke="#7fd4ff" /><text x="3.500" y="19" fontSize="8" fontStyle="italic" fontWeight="700" fill="#fff" fontFamily="Liberation Serif" textLength="23" lengthAdjust="spacingAndGlyphs">Disney+</text></Svg></TaskIcon>
    <TaskIcon><Svg w={28} h={28}><circle cx="14" cy="14" r="13.500" fill="#fff" /><path d="M7 9h12v12H9z" fill="#3d82ec" /><path d="M8 8q4-4 9 0v3H8z" fill="#3ddc84" /><path d="M10 21l3.500-9L17 21M20 12v9" stroke="#16344f" strokeWidth="1.800" /></Svg></TaskIcon>
    <TaskIcon><Svg w={30} h={30}><path d="M10 1l18 2-1 13-14 6z" fill="#ecc64e" stroke="#3a2c10" /><path d="M11 2l9 9 8-7" stroke="#3a2c10" /><circle cx="9.500" cy="15" r="8.500" fill="#e8e8e0" stroke="#999" /><path d="M10 7q8 0 8 8t-8 7z" fill="#167a1c" /><path d="M16 21l7 8" stroke="#222" strokeWidth="3" /></Svg></TaskIcon>
    <TaskIcon dot><Svg w={28} h={28}><path d="M14 4h13v20H14z" fill="#fff" stroke="#2b579a" strokeWidth="1.500" /><path d="M16 8h8.500M16 11h8.500M16 14h8.500M16 17h8.500M16 20h8.500" stroke="#2b579a" /><path d="M0 3l16-3v28L0 25z" fill="#2b579a" /><text x="1.500" y="19" fontSize="13" fontWeight="700" fill="#fff" fontFamily="Open Sans" textLength="12" lengthAdjust="spacingAndGlyphs">W</text></Svg></TaskIcon>
    <div className="ml-[4px] mr-auto mt-[5px] h-[49px] w-[48px] rounded-[5px] bg-[#ede6e7]">
      <div className="flex h-[49px] w-[44px] flex-col items-center rounded-[5px] border border-[#ddd6d7] bg-[#f3eeee] pt-[9px]">
        <Svg w={28} h={28} className="ml-[3px]"><path d="M14 4h13v20H14z" fill="#fff" stroke="#1e7145" strokeWidth="1.500" /><path d="M16 7.500h9M16 10.500h9M16 13.500h9M16 16.500h9M16 19.500h9" stroke="#1e7145" strokeWidth="2" strokeDasharray="4 1" /><path d="M0 3l16-3v28L0 25z" fill="#1e7145" /><text x="3.500" y="19" fontSize="13" fontWeight="700" fill="#fff" fontFamily="Open Sans">X</text></Svg>
        <div className="mt-[7px] ml-[3px] h-[4px] w-[20px] shrink-0 rounded-full bg-[#0b73cf]" />
      </div>
    </div>
    <div className="flex items-center pr-[24px] text-[#1a1a1a]">
      <Svg w={16} h={10}><path d="M1 8.500L8 1.500l7 7" stroke="#222" strokeWidth="1.500" /></Svg>
      <span className="ml-[18px] text-[18px] font-bold leading-none">中</span>
      <Svg w={20} h={16} className="ml-[21px]"><path d="M1 6q9-8.500 18 0M3.800 8.800q6.200-6 12.400 0M6.500 11.500q3.500-3.300 7 0" stroke="#222" strokeWidth="1.400" /><circle cx="10" cy="14" r="1.600" fill="#222" /></Svg>
      <Svg w={19} h={14} className="ml-[10px]"><path d="M1 5h3l4-4v12L4 9.500H1zM12 4l6 6M18 4l-6 6" stroke="#222" strokeWidth="1.300" /></Svg>
      <Svg w={20} h={13} className="ml-[11px]"><rect x=".7" y=".7" width="16" height="11.500" rx="2.500" stroke="#222" strokeWidth="1.400" /><rect x="3" y="3" width="5.500" height="7" fill="#222" /><path d="M18.500 4v5" stroke="#222" strokeWidth="2" /></Svg>
      <div className="ml-[10px] w-[78px] pb-px text-right text-[14.67px] leading-[20px] tracking-[-0.4px]">下午 09:17<br />2022/10/3</div>
      <Svg w={18} h={20} className="ml-[11px]"><path d="M1 15V8q0-6 6-6t6 6v7l2 1.500H0z" fill="#1a1a1a" /><path d="M5 18h5l-2.500 2z" fill="#1a1a1a" /><text x="4.500" y="13" fontSize="9" fontWeight="700" fill="#ddd" fontFamily="Open Sans">z</text><text x="12" y="7" fontSize="9" fontWeight="700" fill="#1a1a1a" fontFamily="Open Sans">z</text></Svg>
    </div>
  </footer>
);

export default function App() {
  return (
    <div className="flex h-[1080px] w-[1920px] flex-col overflow-hidden bg-[#e6e6e6] font-[family-name:'Noto_Sans','Noto_Sans_CJK_TC',sans-serif] leading-[1.3] font-light">
      <TitleBar />
      <Ribbon />
      <FormulaBar />
      <Sheet />
      <SheetTabs />
      <StatusBar />
      <Taskbar />
    </div>
  );
}
